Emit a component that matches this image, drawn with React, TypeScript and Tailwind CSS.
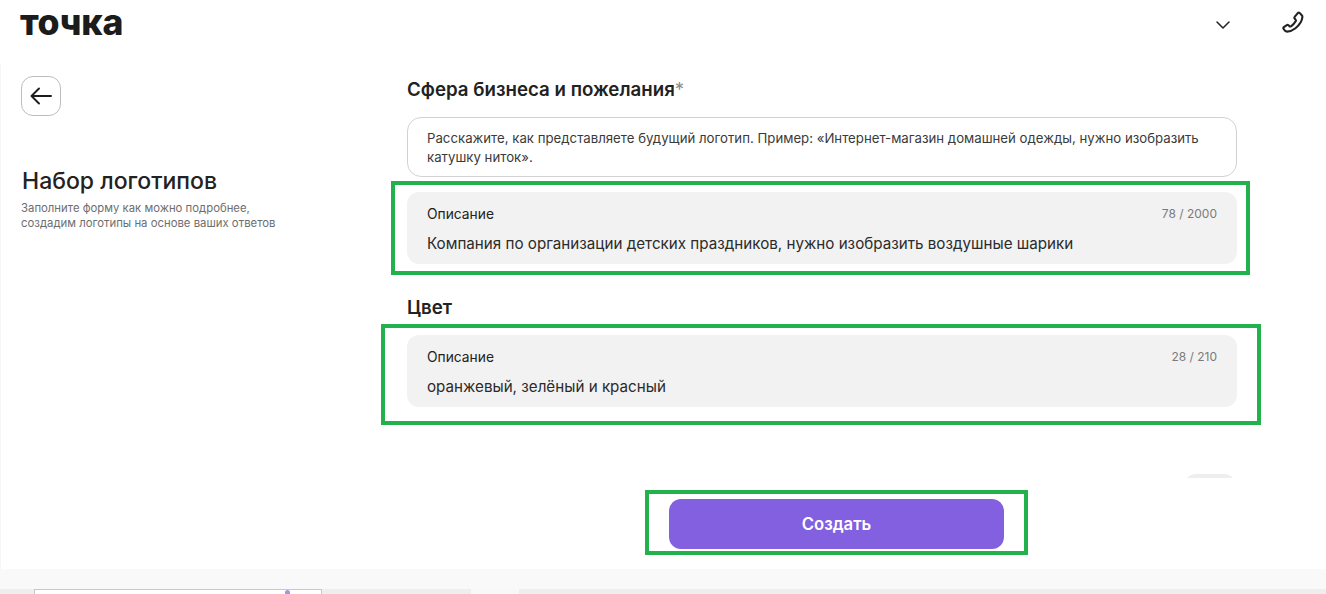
import React from 'react';
import { ChevronDown } from 'lucide-react';

const font = "font-['Inter','Noto_Sans',sans-serif]";

const Field = ({ counter, value }: { counter: string; value: string }) => (
  <div className="h-[72px] rounded-xl bg-[#f2f2f2] px-5 pt-[14px]">
    <div className="flex items-center justify-between">
      <span className="text-[13.8px] leading-4 text-[#222222]">Описание</span>
      <span className="text-[12px] leading-4 text-[#7b7b7b]">{counter}</span>
    </div>
    <div className="mt-[12px] text-[15.2px] leading-5 text-[#2b2b2b]">{value}</div>
  </div>
);

const App = () => {
  return (
    <div className={`${font} flex h-[594px] w-[1326px] flex-col overflow-hidden bg-white text-[#1c1c1c] relative`}>
      {/* Header */}
      <header className="flex h-[64px] items-start justify-between pl-5 pr-[21px]">
        <div className="mt-[3px] text-[35.6px] font-extrabold leading-[40px] tracking-[-0.2px] text-[#1c1c1c]">точка</div>
        <div className="mt-[10px] flex items-start gap-[46px]">
          <ChevronDown className="mt-[3px] h-6 w-6 text-[#222222]" strokeWidth={1.5} />
          <svg width="24" height="24" viewBox="0 0 24 24" fill="none" stroke="#222222" strokeWidth="2.1" strokeLinejoin="round">
            <path d="M17 2.8c.5-.4 1.2-.3 1.6.1l2.2 2.4c.5.5.7 1.2.6 1.9C21 11 18 15.5 14.5 18.3 12 20.3 9 21.6 6 21.6c-.8 0-1.4-.3-1.9-.8l-1.5-1.9c-.5-.6-.4-1.4.2-1.8l3-2c.5-.4 1.2-.3 1.7.1l1 1c.4.4 1 .4 1.5.1 2-1.3 3.7-3.2 4.8-5.2.3-.5.2-1-.2-1.4l-1-1.2c-.4-.5-.4-1.2 0-1.6z" />
          </svg>
        </div>
      </header>

      {/* Body */}
      <main className="flex flex-1 border-l border-[#f6f6f6]">
        <aside className="w-[406px] shrink-0 pl-5 pt-3">
          <button className="flex h-10 w-10 items-center justify-center rounded-xl border border-[#bdbdbd]">
            <svg width="24" height="24" viewBox="0 0 24 24" fill="none" stroke="#1c1c1c" strokeWidth="1.9" strokeLinecap="round" strokeLinejoin="round">
              <path d="M22 12H2.5M10 4.5 2.5 12l7.5 7.5" />
            </svg>
          </button>
          <h1 className="ml-px mt-[50px] text-[23px] font-medium leading-[30px] text-[#222222]">Набор логотипов</h1>
          <p className="mt-[5px] text-[11.35px] leading-[15px] text-[#6e6e6e]">
            Заполните форму как можно подробнее,
            <br />
            создадим логотипы на основе ваших ответов
          </p>
        </aside>

        <section className="flex w-[830px] flex-col">
          <div className="h-[414px] overflow-hidden">
            <h2 className="mt-[14px] text-[18.7px] font-semibold leading-6 text-[#222222]">
              Сфера бизнеса и пожелания<span className="font-normal text-[#8a8a8a]">*</span>
            </h2>
            <div className="mt-[15px] h-[60px] rounded-[14px] border border-[#d2d2d2] pl-[19px] pr-5 pt-[11px] text-[13.22px] leading-[19px] text-[#3a3a3a]">
              Расскажите, как представляете будущий логотип. Пример: «Интернет-магазин домашней одежды, нужно изобразить катушку ниток».
            </div>
            <div className="mt-[15px]">
              <Field counter="78 / 2000" value="Компания по организации детских праздников, нужно изобразить воздушные шарики" />
            </div>
            <h2 className="mt-[32px] text-[18.7px] font-semibold leading-6 text-[#222222]">Цвет</h2>
            <div className="mt-[15px]">
              <Field counter="28 / 210" value="оранжевый, зелёный и красный" />
            </div>
            <div className="ml-auto mr-px mt-[67px] h-6 w-[52px] rounded-full bg-[#eeeeee]" />
          </div>
          <button className="ml-[262px] mt-[21px] h-[50px] w-[335px] rounded-xl bg-[#8360e0] pt-px text-[16.7px] font-semibold text-white">
            Создать
          </button>
        </section>
      </main>

      {/* Page strip below */}
      <div className="h-5 shrink-0 bg-[#f9f9f9]" />
      <div className="flex h-[5px] shrink-0 bg-[#eeeeee]">
        <div className="ml-[34px] flex h-[5px] w-[288px] justify-end border-x border-t border-[#c8c8c8] bg-white pr-[31px]">
          <div className="h-1 w-[5px] rounded-t-sm bg-[#a994dc]" />
        </div>
        <div className="ml-[149px] h-[5px] w-[48px] bg-[#f8f8f8]" />
      </div>

      {/* Green annotation frames */}
      <div className="absolute left-[391px] top-[181px] h-[94px] w-[859px] border-[4px] border-[#22b14c]" />
      <div className="absolute left-[381px] top-[324px] h-[101px] w-[880px] border-[4px] border-[#22b14c]" />
      <div className="absolute left-[645px] top-[490px] h-[65px] w-[383px] border-[4px] border-[#22b14c]" />
    </div>
  );
};

export default App;
